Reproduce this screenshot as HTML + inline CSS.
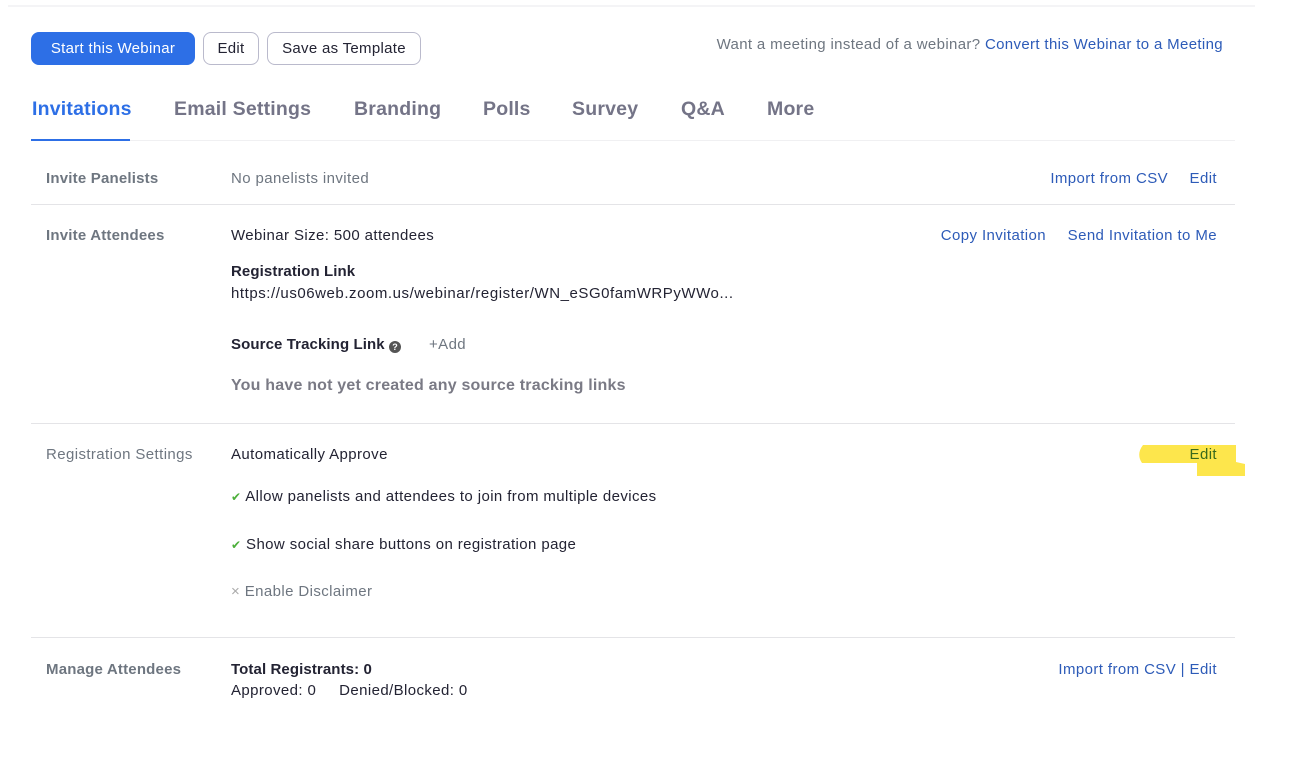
<!DOCTYPE html>
<html><head><meta charset="utf-8"><style>
*{margin:0;padding:0;box-sizing:border-box}
body{width:1290px;height:768px;background:#fff;font-family:"Liberation Sans",sans-serif;position:relative;overflow:hidden;color:#232333}
.a{position:absolute;white-space:nowrap;font-size:15px;letter-spacing:0.4px;line-height:18px;margin-top:1px}
.lbl{color:#6e7680;font-weight:bold;letter-spacing:0.2px}
.gray{color:#6e7680}
.blue{color:#2d5bb8}
.hr{position:absolute;left:31px;width:1204px;height:1px;background:#e4e4e7}
.btn{position:absolute;top:32px;height:33px;border:1px solid #babacc;border-radius:8px;font-size:15px;letter-spacing:0.3px;display:flex;align-items:center;justify-content:center;color:#232333;background:#fff}
.tab{position:absolute;top:98px;font-size:19.5px;letter-spacing:0.2px;font-weight:bold;color:#747487;line-height:22px}
</style></head><body>
<div style="position:absolute;left:8px;top:5px;width:1247px;height:2px;background:#f4f4f6"></div>
<div class="btn" style="left:31px;width:164px;background:#2d6fe6;border-color:#2d6fe6;color:#fff">Start this Webinar</div>
<div class="btn" style="left:203px;width:56px">Edit</div>
<div class="btn" style="left:267px;width:154px">Save as Template</div>
<div class="a" style="right:67px;top:35px;color:#6e7680;letter-spacing:0.35px">Want a meeting instead of a webinar? <span class="blue">Convert this Webinar to a Meeting</span></div>

<div class="tab" style="left:32px;color:#2d6fe6">Invitations</div>
<div class="tab" style="left:174px">Email Settings</div>
<div class="tab" style="left:354px">Branding</div>
<div class="tab" style="left:483px">Polls</div>
<div class="tab" style="left:572px">Survey</div>
<div class="tab" style="left:681px">Q&amp;A</div>
<div class="tab" style="left:767px">More</div>
<div class="hr" style="top:140px;background:#f0f0f2"></div>
<div style="position:absolute;left:31px;top:139px;width:99px;height:2px;background:#2d6fe6"></div>

<div class="a lbl" style="left:46px;top:169px">Invite Panelists</div>
<div class="a gray" style="left:231px;top:169px">No panelists invited</div>
<div class="a blue" style="right:122px;top:169px">Import from CSV</div>
<div class="a blue" style="right:73px;top:169px">Edit</div>
<div class="hr" style="top:204px"></div>

<div class="a lbl" style="left:46px;top:226px">Invite Attendees</div>
<div class="a" style="left:231px;top:226px">Webinar Size: 500 attendees</div>
<div class="a blue" style="right:244px;top:226px">Copy Invitation</div>
<div class="a blue" style="right:73px;top:226px">Send Invitation to Me</div>
<div class="a" style="left:231px;top:262px;font-weight:bold;letter-spacing:0.1px">Registration Link</div>
<div class="a" style="left:231px;top:284px;letter-spacing:0.55px">https://us06web.zoom.us/webinar/register/WN_eSG0famWRPyWWo...</div>
<div class="a" style="left:231px;top:335px;font-weight:bold;letter-spacing:0.1px">Source Tracking Link <span style="display:inline-block;width:12px;height:12px;border-radius:50%;background:#555;color:#fff;font-size:9px;line-height:12px;text-align:center;vertical-align:-1px;letter-spacing:0">?</span></div>
<div class="a gray" style="left:429px;top:335px">+Add</div>
<div class="a" style="left:231px;top:376px;font-weight:bold;color:#7a7a85;font-size:16px;letter-spacing:0.2px">You have not yet created any source tracking links</div>
<div class="hr" style="top:423px"></div>

<div class="a gray" style="left:46px;top:445px">Registration Settings</div>
<div class="a" style="left:231px;top:445px">Automatically Approve</div>
<svg style="position:absolute;left:1135px;top:443px" width="112" height="36"><path d="M8 2 Q1 11 7 20 L62 20 L62 33 L110 33 L110 21 L101 19 L101 2 Z" fill="#fde64c"/></svg>
<div class="a" style="right:73px;top:445px;color:#3a6a1c">Edit</div>
<div class="a" style="left:231px;top:487px"><span style="color:#4caf3a;font-size:12px">✔</span> Allow panelists and attendees to join from multiple devices</div>
<div class="a" style="left:231px;top:535px"><span style="color:#4caf3a;font-size:12px">✔</span> Show social share buttons on registration page</div>
<div class="a gray" style="left:231px;top:582px"><span style="color:#aaa">×</span> Enable Disclaimer</div>
<div class="hr" style="top:637px"></div>

<div class="a lbl" style="left:46px;top:660px">Manage Attendees</div>
<div class="a" style="left:231px;top:660px;font-weight:bold;letter-spacing:0.1px">Total Registrants: 0</div>
<div class="a" style="left:231px;top:681px">Approved: 0&nbsp;&nbsp;&nbsp;&nbsp;&nbsp;Denied/Blocked: 0</div>
<div class="a blue" style="right:73px;top:660px">Import from CSV | Edit</div>
</body></html>
